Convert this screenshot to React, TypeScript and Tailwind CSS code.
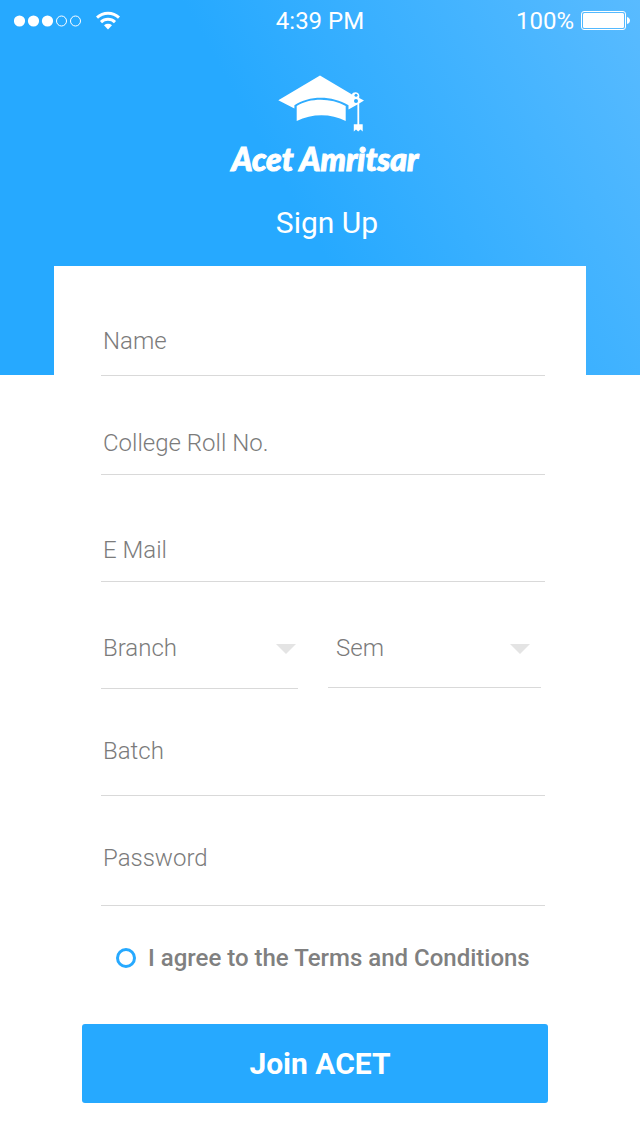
import type { InputHTMLAttributes, SelectHTMLAttributes } from "react";

function StatusBar() {
  return (
    <div className="grid h-[41px] grid-cols-[1fr_auto_1fr] items-center px-[10px] text-2xl leading-8">
      <div className="flex items-center gap-[14px] pl-1">
        <svg viewBox="0 0 68 12" className="h-3 w-[68px]" aria-hidden="true">
          <circle cx="5.5" cy="6" r="5.6" fill="white" />
          <circle cx="19.5" cy="6" r="5.6" fill="white" />
          <circle cx="33.5" cy="6" r="5.6" fill="white" />
          <circle cx="47.5" cy="6" r="5" fill="none" stroke="white" />
          <circle cx="61.5" cy="6" r="5" fill="none" stroke="white" />
        </svg>
        <svg viewBox="0 0 24 19" className="h-[19px] w-6" aria-hidden="true">
          <g fill="none" stroke="white" strokeWidth="3">
            <path d="M1 6.6C7.2 .8 16.8 .8 23 6.6" />
            <path d="M5 11.2C9 7.4 15 7.4 19 11.2" />
          </g>
          <path d="M8 14.2C10.4 12.3 13.6 12.3 16 14.2L12 18.5Z" fill="white" />
        </svg>
      </div>
      <span>4:39 PM</span>
      <div className="flex items-center justify-end gap-[7px]">
        <span>100%</span>
        <svg viewBox="0 0 49 19" className="h-[19px] w-[49px]" aria-hidden="true">
          <rect x="0.5" y="0.5" width="44" height="18" rx="2.5" fill="none" stroke="white" />
          <rect x="2" y="2" width="41" height="15" rx="1.5" fill="white" />
          <path d="M46 6C48 6.5 49 8 49 9.5S48 12.5 46 13Z" fill="white" />
        </svg>
      </div>
    </div>
  );
}

function GraduationCap() {
  return (
    <svg viewBox="276 75 88 58" className="h-[58px] w-[88px]" aria-hidden="true">
      <path
        fill="white"
        d="M278.3 100.2L320 75.6L352 94.6C352.3 91.5 358.8 91.2 359.3 95.2L359.2 98L364 100.6L359.2 103.4V124.3H362.7V131.500L360.5 129.5L358.2 131.5L356 129.5L353.8 131.5V124.3H357.4V104.6L348.5 109.6V105.2C332 95.2 309 95.2 294.4 105.2V108.6Z"
      />
      <path
        fill="white"
        d="M296.7 106C310 97.8 331 97.8 345.7 106V121C331 113.4 312 113.4 296.7 121Z"
      />
      <g fill="#2eacff">
        <circle cx="356" cy="95.2" r="1.5" />
        <circle cx="356" cy="101" r="2" />
      </g>
    </svg>
  );
}

function Field({ className, ...props }: InputHTMLAttributes<HTMLInputElement>) {
  return (
    <input
      {...props}
      aria-label={props.placeholder}
      className={`block w-full border-b border-[#d9d9d9] bg-transparent pl-[2px] text-2xl leading-8 font-light text-[#7b7b7b] outline-none placeholder:text-[#7b7b7b] placeholder:opacity-100 ${className}`}
    />
  );
}

type PickerProps = SelectHTMLAttributes<HTMLSelectElement> & {
  label: string;
  arrowClass: string;
};

function Picker({ label, className, arrowClass, ...props }: PickerProps) {
  return (
    <div className="grid items-start">
      <select
        {...props}
        aria-label={label}
        defaultValue=""
        className={`col-start-1 row-start-1 w-full appearance-none border-b border-[#d9d9d9] bg-transparent text-2xl leading-8 font-light text-[#7b7b7b] outline-none ${className}`}
      >
        <option value="">{label}</option>
      </select>
      <svg
        viewBox="0 0 20 10"
        className={`pointer-events-none col-start-1 row-start-1 mt-3 h-[10px] w-5 justify-self-end ${arrowClass}`}
        aria-hidden="true"
      >
        <path d="M0 0H20L10 10Z" fill="#e4e4e4" />
      </svg>
    </div>
  );
}

export default function App() {
  return (
    <div className="min-h-screen bg-white font-['Roboto',sans-serif]">
      <header className="bg-[linear-gradient(61deg,#26a9ff_46%,#59bbff_100%)] pb-[109px] text-white">
        <StatusBar />
        <div className="flex flex-col items-center pt-[34px] pb-[23px]">
          <GraduationCap />
          <p className="mt-2 pl-[10px] font-['Lato',sans-serif] text-[32px] leading-9 font-black italic [-webkit-text-stroke:1px_white]">
            Acet Amritsar
          </p>
          <h1 className="mt-[26px] pl-[14px] text-[30px] leading-10">Sign Up</h1>
        </div>
      </header>

      <form className="mx-[54px] -mt-[109px] bg-white pb-8" onSubmit={(e) => e.preventDefault()}>
        <div className="mr-[41px] ml-[47px] pt-[59px]">
          <Field name="name" placeholder="Name" className="pb-[18px]" />
          <Field name="roll" placeholder="College Roll No." className="mt-[51px] pb-[15px]" />
          <Field name="email" type="email" placeholder="E Mail" className="mt-[59px] pb-[15px]" />
          <div className="mt-[50px] mr-1 grid grid-cols-[197fr_213fr] gap-[30px]">
            <Picker name="branch" label="Branch" className="pb-6 pl-[2px]" arrowClass="mr-[2px]" />
            <Picker name="sem" label="Sem" className="pb-[23px] pl-2" arrowClass="mr-[11px]" />
          </div>
          <Field name="batch" placeholder="Batch" className="mt-[46px] pb-7" />
          <Field
            name="password"
            type="password"
            placeholder="Password"
            className="mt-[46px] pb-[31px]"
          />
        </div>

        <div className="mt-9 ml-[62px] flex items-center gap-3">
          <input
            id="terms"
            type="checkbox"
            className="size-5 shrink-0 appearance-none rounded-full border-[3px] border-[#26a9ff] checked:bg-[#26a9ff]"
          />
          <label htmlFor="terms" className="text-2xl leading-8 font-medium text-[#808080]">
            I agree to the Terms and Conditions
          </label>
        </div>

        <div className="mt-[50px] mr-[38px] ml-7">
          <button
            type="submit"
            className="h-[79px] w-full rounded-[3px] bg-[#26a9ff] pl-[10px] text-[30px] leading-10 font-bold text-white"
          >
            Join ACET
          </button>
        </div>
      </form>
    </div>
  );
}
